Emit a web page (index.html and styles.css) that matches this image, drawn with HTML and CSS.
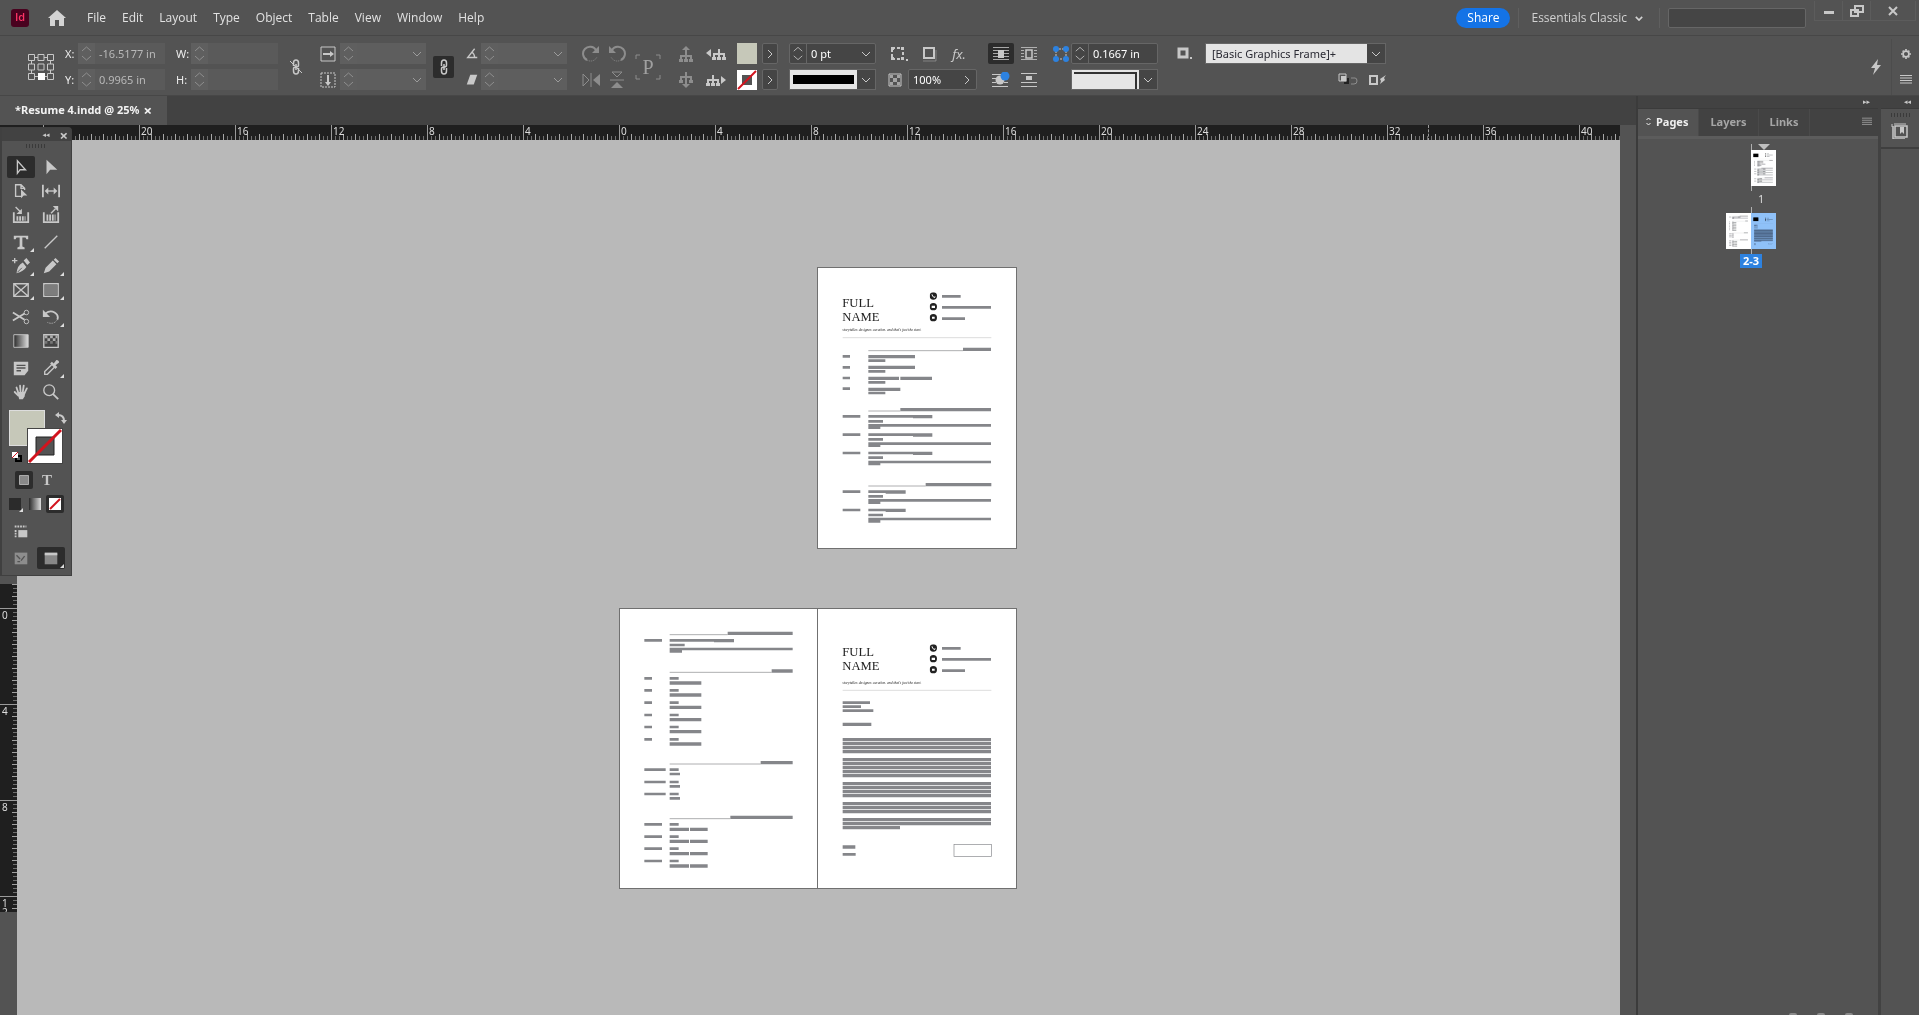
FILE: index.html
```html
<!DOCTYPE html>
<html lang="en">
<head>
<meta charset="utf-8">
<title>Resume 4.indd</title>
<link rel="stylesheet" href="styles.css">
</head>
<body>
<svg class="defs" aria-hidden="true">
  <symbol id="contacts" viewBox="0 0 186 90">
    <g fill="none" stroke="#85868a" stroke-width="8"><path d="M37 12H93M37 45H184M37 79H106"/></g>
    <g fill="#222"><circle cx="11" cy="11" r="11"/><circle cx="11" cy="43" r="11"/><circle cx="11" cy="76" r="11"/></g>
    <path d="M7 6Q7 13 15 16L16 12" fill="none" stroke="#fff" stroke-width="3"/>
    <path d="M6 40H16V47H6ZM7 73H15V79H7Z" fill="#fff"/>
  </symbol>
  <symbol id="page-1" viewBox="25 24 594 840">
    <rect x="25" y="24" width="594" height="840" fill="#fff"/>
    <use href="#contacts" x="360" y="97" width="186" height="90"/>
    <g fill="none" stroke="#85868a">
      <path stroke-width="10" d="M460 268H544M176 290H316M176 322H316M176 355H268M272 355H367M176 388H272M272 449H544M348 674H545"/>
      <path stroke-width="8" d="M99 289H121M99 322H121M99 354H121M99 386H121M176 302H227M176 334H227M176 367H227M176 399H227"/>
      <path stroke-width="8" d="M99 469H152M176 469H368M310 471H368M176 484H220M176 496H544M176 503H212M99 524H152M176 524H368M310 526H368M176 538H220M176 551H544M176 557H212M99 579H152M176 579H368M310 581H368M176 593H220M176 606H544M176 612H212"/>
      <path stroke-width="8" d="M99 695H152M176 695H288M228 697H288M176 709H220M176 721H544M176 728H212M99 750H152M176 750H288M228 752H288M176 765H220M176 777H544M176 784H212"/>
      <path stroke-width="2" d="M176 272H460M176 453H272M176 678H348"/>
      <path stroke-width="2" stroke="#ccc" d="M99 233H545"/>
    </g>
  </symbol>
  <symbol id="page-2" viewBox="31 27 591 837">
    <rect x="31" y="27" width="591" height="837" fill="#fff"/>
    <g fill="none" stroke="#85868a">
      <path stroke-width="10" d="M354 100H549M486 213H549M453 488H549M362 652H549"/>
      <path stroke-width="2" d="M180 104H354M180 217H486M180 492H453M180 656H362"/>
      <path stroke-width="8" d="M104 121H157M180 121H373M313 123H373M180 135H225M180 147H549M180 154H217"/>
      <path stroke-width="8" d="M104 235H127M180 235H207M104 271H127M180 271H207M104 308H127M180 308H207M104 345H127M180 345H207M104 381H127M180 381H207M104 418H127M180 418H207"/>
      <path stroke-width="10" d="M180 249H275M180 285H275M180 322H275M180 359H275M180 395H275M180 432H275"/>
      <path stroke-width="8" d="M104 509H168M180 509H207M180 522H211M104 546H168M180 546H207M180 559H211M104 582H168M180 582H207M180 595H211"/>
      <path stroke-width="8" d="M104 673H157M180 673H207M104 710H157M180 710H207M104 746H157M180 746H207M104 783H157M180 783H207"/>
      <path stroke-width="10" d="M180 688H238M241 688H294M180 724H238M241 724H294M180 761H238M241 761H294M180 798H238M241 798H294"/>
    </g>
  </symbol>
  <symbol id="page-3" viewBox="25 27 594 837">
    <rect x="25" y="27" width="594" height="837" fill="#fff"/>
    <use href="#contacts" x="360" y="133" width="186" height="90"/>
    <g fill="none" stroke="#85868a">
      <path stroke-width="2" stroke="#ccc" d="M99 271H545"/>
      <path stroke-width="8" d="M99 308H181M99 320H154M99 332H191M99 763H138"/>
      <path stroke-width="10" d="M99 373H185M99 741H137M99 419H544M99 431H544M99 443H544M99 455H544M99 479H544M99 491H544M99 503H544M99 515H544M99 527H544M99 551H544M99 563H544M99 575H544M99 587H544M99 611H544M99 623H544M99 635H544M99 659H544M99 671H544M99 683H271"/>
      <rect x="433" y="733" width="112" height="36" stroke-width="2"/>
    </g>
  </symbol>

  <symbol id="spin" viewBox="0 0 17 21"><path d="M4 8 8.500 4 13 8M4 13 8.500 17 13 13" class="ln"/></symbol>
  <symbol id="chev" viewBox="0 0 10 6"><path d="M1 1 5 5 9 1" class="ln"/></symbol>
  <symbol id="chev-b" viewBox="0 0 10 6"><path d="M1 1 5 5 9 1" class="ln" stroke-width="2"/></symbol>
  <symbol id="chev-r" viewBox="0 0 6 10"><path d="M1 1 5 5 1 9" class="ln"/></symbol>
  <symbol id="home" viewBox="0 0 18 16"><path class="fl" d="M9 0 18 8H16V16H11V10H7V16H2V8H0Z"/></symbol>
  <symbol id="ref" viewBox="0 0 26 26"><path class="ln" d="M6.500 3.500H10M16 3.500H20M6.500 22.500H10M16 22.500H20M3.500 6.500V10M3.500 16V20M22.500 6.500V10M22.500 16V20"/><path class="ln" d="M.5.500H6.500V6.500H.5ZM10 .5H16V6.500H10ZM19.500.500H25.500V6.500H19.500ZM.5 10H6.500V16H.5ZM10 10H16V16H10ZM19.500 10H25.500V16H19.500ZM.5 19.500H6.500V25.500H.5ZM19.500 19.500H25.500V25.500H19.500Z"/><path fill="#fff" d="M10 19H17V26H10Z"/></symbol>
  <symbol id="chain" viewBox="0 0 16 16"><path class="ln" stroke-width="1.500" d="M5.500 7V4Q5.500 1 8 1T10.500 4V6Q10.500 8 8.500 8M10.500 9V12Q10.500 15 8 15T5.500 12V10Q5.500 8 7.500 8M8 5V11"/></symbol>
  <symbol id="unchain" viewBox="0 0 16 16"><use href="#chain"/><path class="ln" d="M2 2 14 14"/></symbol>
  <symbol id="scale-x" viewBox="0 0 16 16"><path class="ln" d="M1 1H15V15H1Z"/><path class="ln" stroke-width="2" d="M3 8H11"/><path class="fl" d="M10 5 14 8 10 11Z"/></symbol>
  <symbol id="scale-y" viewBox="0 0 16 16"><path class="ln" d="M1 1H15V15H1Z" stroke-dasharray="2 1"/><path class="ln" stroke-width="2" d="M8 3V11"/><path class="fl" d="M5 10 8 14 11 10Z"/></symbol>
  <symbol id="angle" viewBox="0 0 16 16"><path class="ln" stroke-width="1.500" d="M11 2 3 12H14M8 6Q11 8 11 12"/></symbol>
  <symbol id="shear" viewBox="0 0 16 16"><path class="fl" d="M6 2H14L10 13H2Z"/></symbol>
  <symbol id="rot-cw" viewBox="0 0 18 18"><path class="ln" stroke-width="2" d="M14 5A7 7 0 1 0 5 15"/><path class="ln" stroke-dasharray="1 1" d="M5 15A7 7 0 0 0 15 12"/><path class="fl" d="M17 1V8H10Z"/></symbol>
  <symbol id="rot-ccw" viewBox="0 0 18 18"><path class="ln" stroke-width="2" d="M4 5A7 7 0 1 1 13 15"/><path class="ln" stroke-dasharray="1 1" d="M13 15A7 7 0 0 1 3 12"/><path class="fl" d="M1 1V8H8Z"/></symbol>
  <symbol id="flip-h" viewBox="0 0 18 16"><path class="ln" d="M1 2V14L7 8ZM9 1V15" /><path class="fl" d="M18 2V14L11 8Z"/></symbol>
  <symbol id="flip-v" viewBox="0 0 16 18"><path class="ln" d="M3 1H13L8 6ZM1 9H15"/><path class="fl" d="M2 17H14L8 11Z"/></symbol>
  <symbol id="pbox" viewBox="0 0 26 26"><path class="ln" d="M1 5V1H5M21 1H25V5M25 21V25H21M5 25H1V21"/></symbol>
  <symbol id="tree-up" viewBox="0 0 16 18"><path class="ln" stroke-width="2" d="M3 16V11H13V16M8 16V4"/><path class="fl" d="M4 5 8 1 12 5ZM1 14H5V17H1ZM6 14H10V17H6ZM11 14H15V17H11Z"/></symbol>
  <symbol id="tree-dn" viewBox="0 0 16 18"><path class="ln" stroke-width="2" d="M3 11V6H13V11M8 1V14"/><path class="fl" d="M4 13 8 17 12 13ZM1 9H5V12H1ZM11 9H15V12H11Z"/></symbol>
  <symbol id="tree-l" viewBox="0 0 20 16"><path class="ln" stroke-width="2" d="M8 13V8H18V13M13 13V3"/><path class="fl" d="M0 7 5 3V11ZM6 11H10V14H6ZM11 11H15V14H11ZM16 11H20V14H16Z"/></symbol>
  <symbol id="tree-r" viewBox="0 0 20 16"><path class="ln" stroke-width="2" d="M2 13V8H12V13M7 13V3"/><path class="fl" d="M20 8 15 4V12ZM0 11H4V14H0ZM5 11H9V14H5ZM10 11H14V14H10Z"/></symbol>
  <symbol id="none" viewBox="0 0 20 20"><path fill="#fff" fill-rule="evenodd" d="M0 0H20V20H0ZM5 5V15H15V5Z"/><path d="M1 19 19 1" stroke="#d2141e" stroke-width="2"/></symbol>
  <symbol id="corners" viewBox="0 0 18 16"><path class="ln" stroke-width="2" stroke-dasharray="3 2" d="M2 2H13V13H2Z"/><path class="fl" d="M1 1H4V4H1ZM11 1H14V4H11ZM1 11H4V14H1ZM11 11H14V14H11ZM16 13H18V15H16Z"/></symbol>
  <symbol id="shadow" viewBox="0 0 16 16"><path class="ln" stroke-width="2" d="M3 2H13V12H3Z"/><path class="ln" d="M2 15H15V4" opacity=".4"/></symbol>
  <symbol id="opacity" viewBox="0 0 14 14"><path class="ln" d="M1 1H13V13H1Z"/><path class="fl" d="M2 2H5V5H2ZM9 2H12V5H9ZM5 5H9V9H5ZM2 9H5V12H2ZM9 9H12V12H9Z" opacity=".7"/></symbol>
  <symbol id="wrap-none" viewBox="0 0 16 16"><path class="ln" d="M0 1.500H16M0 4.500H16M0 7.500H16M0 10.500H16M0 13.500H16" opacity=".8"/><path class="fl" d="M5 4H11V12H5Z"/></symbol>
  <symbol id="wrap-box" viewBox="0 0 16 16"><path class="ln" d="M0 1.500H16M0 4.500H3M13 4.500H16M0 7.500H3M13 7.500H16M0 10.500H3M13 10.500H16M0 13.500H16" opacity=".8"/><path class="ln" stroke-width="1.500" d="M5 4H11V12H5Z"/></symbol>
  <symbol id="wrap-shape" viewBox="0 0 18 16"><path class="ln" d="M0 2.500H9M0 6.500H4M0 10.500H4M12 10.500H16M0 14.500H16"/><circle class="fl" cx="8" cy="8" r="4.500"/><circle cx="13" cy="4" r="4.500" fill="#2d82e0"/></symbol>
  <symbol id="wrap-jump" viewBox="0 0 16 16"><path class="ln" d="M0 1.500H16M0 10.500H16M0 14.500H16"/><path class="fl" d="M5 4H11V8H5Z"/></symbol>
  <symbol id="corner-blue" viewBox="0 0 16 16"><path class="ln" stroke-dasharray="2 1" d="M3 3H13V13H3Z"/><g fill="#2d82e0"><circle cx="3" cy="3" r="3"/><circle cx="13" cy="3" r="3"/><circle cx="3" cy="13" r="3"/><circle cx="13" cy="13" r="3"/></g></symbol>
  <symbol id="frame" viewBox="0 0 16 14"><path class="ln" stroke-width="3" d="M2 2H10V10H2Z"/><path class="fl" d="M13 10H15V12H13Z"/></symbol>
  <symbol id="clear" viewBox="0 0 20 14"><path class="ln" d="M1 1H8V8H1Z"/><path class="fl" d="M3 3H8V8H3Z"/><path d="M6 10H10V5" stroke="#222" stroke-width="2" fill="none"/><path class="ln" opacity=".5" d="M13 5H17Q19 5 19 8T16 11H13"/></symbol>
  <symbol id="restyle" viewBox="0 0 18 14"><path class="ln" stroke-width="2" d="M2 3H9V11H2Z"/><path class="fl" d="M18 2 12 6 13 8 12 11 17 7 16 5Z"/></symbol>
  <symbol id="bolt" viewBox="0 0 10 16"><path class="fl" d="M7 0 0 9H4L2 16 10 6H6Z"/></symbol>
  <symbol id="gear" viewBox="0 0 12 12"><circle class="ln" cx="6" cy="6" r="3.500" stroke-width="2"/><path class="ln" stroke-width="2" d="M6 0V2M6 10V12M0 6H2M10 6H12M2 2 3 3M9 9 10 10M2 10 3 9M9 3 10 2"/></symbol>
  <symbol id="lines" viewBox="0 0 12 9"><path class="ln" d="M0 .5H12M0 3H12M0 5.500H12M0 8H12"/></symbol>

  <symbol id="t-select" viewBox="0 0 20 20"><path class="ln" stroke-width="1.500" d="M6 3V17L9 13H15Z"/></symbol>
  <symbol id="t-direct" viewBox="0 0 20 20"><path class="fl" d="M5 2V18L9 13H17Z"/></symbol>
  <symbol id="t-page" viewBox="0 0 20 20"><path class="ln" stroke-width="1.500" d="M10 16H4V3H10L14 7V9M10 3V7H14"/><path class="fl" d="M10 8V18L13 15H17Z"/></symbol>
  <symbol id="t-gap" viewBox="0 0 20 20"><path class="ln" stroke-width="2" d="M1 3V17M19 3V17"/><path class="ln" stroke-width="1.500" d="M5 10H15"/><path class="fl" d="M3 10 7 6V14ZM17 10 13 6V14Z"/></symbol>
  <symbol id="t-collect" viewBox="0 0 20 20"><path class="ln" stroke-width="2" d="M2 7V18H18V7"/><path class="ln" stroke-dasharray="2 1" stroke-width="5" d="M5 14H15"/><path class="ln" stroke-width="1.500" d="M4 1 9 6"/><path class="fl" d="M11 9H5L11 3Z"/></symbol>
  <symbol id="t-place" viewBox="0 0 20 20"><path class="ln" stroke-width="2" d="M2 7V18H18V7"/><path class="ln" stroke-dasharray="2 1" stroke-width="7" d="M5 13H15"/><path class="ln" stroke-width="1.500" d="M10 8 15 3"/><path class="fl" d="M12 0H18V6Z"/></symbol>
  <symbol id="t-type" viewBox="0 0 20 20"><path class="fl" d="M2 3H18V7H16L15 5H11.500V15L14 16V18H6V16L8.500 15V5H5L4 7H2Z"/></symbol>
  <symbol id="t-line" viewBox="0 0 20 20"><path class="ln" stroke-width="1.500" d="M3 17 17 3"/></symbol>
  <symbol id="t-pen" viewBox="0 0 20 20"><path class="ln" stroke-width="1.500" d="M0 4H6M3 1V7"/><path class="fl" d="M5 18Q6 9 12 6L16 11Q13 16 5 18ZM13 4 16 1 20 6 17 9Z"/><path d="M6 17 11 12" stroke="#535353"/></symbol>
  <symbol id="t-pencil" viewBox="0 0 20 20"><path class="fl" d="M2 18 4 12 12 4 16 8 8 16ZM13 3 15 1 19 5 17 7Z"/></symbol>
  <symbol id="t-frame" viewBox="0 0 20 20"><path class="ln" stroke-width="1.500" d="M2 3H18V17H2ZM2 3 18 17M18 3 2 17"/></symbol>
  <symbol id="t-rect" viewBox="0 0 20 20"><path class="ln" stroke-width="1.500" d="M2 3H18V17H2Z"/><path fill="#7d7d7d" d="M3 4H17V16H3Z"/></symbol>
  <symbol id="t-cut" viewBox="0 0 20 20"><path class="ln" stroke-width="2" d="M1 5 14 13M1 14 14 6"/><circle class="ln" cx="16" cy="5" r="2.500"/><circle class="ln" cx="16" cy="15" r="2.500"/></symbol>
  <symbol id="t-rotate" viewBox="0 0 20 20"><path class="ln" stroke-width="2" d="M4 6Q9 2 14 5T17 13"/><path class="ln" stroke-dasharray="1 1" d="M17 13Q13 19 6 16"/><path class="fl" d="M1 2V10H9Z"/></symbol>
  <linearGradient id="fade"><stop offset="0" stop-color="#2b2b2b"/><stop offset="1" stop-color="#ddd"/></linearGradient>
  <symbol id="t-grad" viewBox="0 0 20 20"><path fill="url(#fade)" stroke="#c8c8c8" d="M2 3H18V17H2Z"/></symbol>
  <symbol id="t-feather" viewBox="0 0 20 20"><path fill="#444" d="M2 3H18V17H2Z"/><path class="fl" d="M3 4H6V7H3ZM9 4H12V7H9ZM15 4H17V7H15ZM6 7H9V10H6ZM12 7H15V10H12Z" opacity=".8"/><path fill="#777" d="M3 10H6V13H3ZM9 10H12V13H9ZM15 10H17V13H15Z"/><path class="ln" stroke-width="1.500" d="M2 3H18V17H2Z"/></symbol>
  <symbol id="t-note" viewBox="0 0 20 20"><path class="fl" d="M2 3H18V13L14 18H2Z"/><path stroke="#535353" stroke-width="1.500" fill="none" d="M5 7H15M5 10H15M5 13H10"/></symbol>
  <symbol id="t-drop" viewBox="0 0 20 20"><path class="ln" stroke-width="1.500" d="M11 6 3 14V17H6L14 9"/><path class="fl" d="M9 5 11 3 13 5 16 1Q19 1 19 4L15 7 17 9 15 11Z"/></symbol>
  <symbol id="t-hand" viewBox="0 0 20 20"><path class="ln" stroke-width="2" stroke-linecap="round" d="M7 11 5 5M9.500 10 9 3M12 10 13 3M14 11 16.500 6M7 14 3 10"/><path class="fl" d="M6 10H15L14 15 12 18H8Z"/></symbol>
  <symbol id="t-zoom" viewBox="0 0 20 20"><circle class="ln" cx="8" cy="8" r="6" stroke-width="1.500"/><path class="ln" stroke-width="2" d="M12 12 18 18"/></symbol>
  <symbol id="t-swap" viewBox="0 0 12 12"><path class="ln" stroke-width="2" d="M3 3Q9 3 9 9"/><path class="fl" d="M0 3 4 0V6ZM9 12 6 8H12Z"/></symbol>
  <symbol id="t-default" viewBox="0 0 12 12"><path d="M5 5H10V10H5Z" fill="none" stroke="#000" stroke-width="2"/><path fill="#fff" d="M1 1H7V7H1Z"/><path stroke="#d2141e" d="M1 7 7 1"/></symbol>
  <symbol id="t-tlist" viewBox="0 0 20 20"><path class="fl" d="M7 9H17V17H7Z"/><path class="ln" stroke-dasharray="2 1" stroke-width="2" d="M3 5H16M4 9V17"/></symbol>
  <symbol id="t-normal" viewBox="0 0 20 20"><path fill="#8d8d8d" d="M3 4H17V17H3Z"/><path d="M5 7 9 11M14 8 10 13M6 14H9" stroke="#535353" stroke-width="1.500"/></symbol>
  <symbol id="t-preview" viewBox="0 0 20 20"><path fill="#888" d="M3 5H17V17H3Z"/><path class="fl" d="M3 4H17V7H3Z"/></symbol>
  <symbol id="book" viewBox="0 0 18 16"><path class="ln" stroke-width="1.500" d="M4 3H16V14H4ZM2 3V16H14"/><path class="ln" d="M1 1V4M3 1H15"/><path class="fl" d="M9 4H13V11L11 9 9 11Z"/></symbol>
</svg>

<header class="menubar">
  <span class="app">Id</span>
  <button class="icon-btn" aria-label="Home"><svg width="18" height="16"><use href="#home"/></svg></button>
  <nav class="menus">
    <button>File</button><button>Edit</button><button>Layout</button><button>Type</button><button>Object</button><button>Table</button><button>View</button><button>Window</button><button>Help</button>
  </nav>
  <div class="menubar-end">
    <button class="share">Share</button>
    <button class="workspace">Essentials Classic <svg width="8" height="5"><use href="#chev-b"/></svg></button>
    <input class="search" type="search" aria-label="Search">
  </div>
  <div class="window-btns">
    <button aria-label="Minimize"><svg width="12" height="12"><path class="fl" d="M1 6H11V9H1Z"/></svg></button>
    <button aria-label="Restore"><svg width="14" height="12"><path class="ln" stroke-width="2" d="M5 1H13V7H5ZM1 5H8V11H1Z"/></svg></button>
    <button aria-label="Close"><svg width="12" height="12"><path class="ln" stroke-width="2" d="M2 2 10 10M10 2 2 10"/></svg></button>
  </div>
</header>

<section class="control" aria-label="Control">
  <svg class="ref" width="26" height="26"><use href="#ref"/></svg>
  <div class="grp">
    <div class="row"><label for="x" class="lab">X:</label><span class="num dim"><svg class="spin"><use href="#spin"/></svg><input id="x" value="-16.5177 in"></span></div>
    <div class="row"><label for="y" class="lab">Y:</label><span class="num dim"><svg class="spin"><use href="#spin"/></svg><input id="y" value="0.9965 in"></span></div>
  </div>
  <div class="grp">
    <div class="row"><label for="w" class="lab wide">W:</label><span class="num dim"><svg class="spin"><use href="#spin"/></svg><input id="w"></span></div>
    <div class="row"><label for="h" class="lab wide">H:</label><span class="num dim"><svg class="spin"><use href="#spin"/></svg><input id="h"></span></div>
  </div>
  <button class="icon-btn unlink" aria-label="Constrain size"><svg width="16" height="16"><use href="#unchain"/></svg></button>
  <div class="pair">
    <div class="grp">
      <div class="row r4"><svg width="16" height="16"><use href="#scale-x"/></svg><span class="num combo"><svg class="spin"><use href="#spin"/></svg><input aria-label="Scale X"><svg class="arr"><use href="#chev"/></svg></span></div>
      <div class="row r4"><svg width="16" height="16"><use href="#scale-y"/></svg><span class="num combo"><svg class="spin"><use href="#spin"/></svg><input aria-label="Scale Y"><svg class="arr"><use href="#chev"/></svg></span></div>
    </div>
    <button class="icon-btn on link" aria-label="Link scale"><svg width="16" height="16"><use href="#chain"/></svg></button>
  </div>
  <div class="grp">
    <div class="row r2"><svg width="14" height="14"><use href="#angle"/></svg><span class="num combo"><svg class="spin"><use href="#spin"/></svg><input aria-label="Rotation"><svg class="arr"><use href="#chev"/></svg></span></div>
    <div class="row r2"><svg width="14" height="14"><use href="#shear"/></svg><span class="num combo"><svg class="spin"><use href="#spin"/></svg><input aria-label="Shear"><svg class="arr"><use href="#chev"/></svg></span></div>
  </div>
  <div class="pair faint">
    <div class="grp">
      <div class="row"><button class="icon-btn cell26" aria-label="Rotate clockwise"><svg width="18" height="18"><use href="#rot-cw"/></svg></button><button class="icon-btn cell26" aria-label="Rotate counterclockwise"><svg width="18" height="18"><use href="#rot-ccw"/></svg></button></div>
      <div class="row"><button class="icon-btn cell26" aria-label="Flip horizontal"><svg width="18" height="16"><use href="#flip-h"/></svg></button><button class="icon-btn cell26" aria-label="Flip vertical"><svg width="16" height="18"><use href="#flip-v"/></svg></button></div>
    </div>
    <span class="pmark"><svg width="26" height="26"><use href="#pbox"/></svg><span>P</span></span>
  </div>
  <div class="grp">
    <div class="row r12"><button class="icon-btn faint" aria-label="Select container"><svg width="16" height="18"><use href="#tree-up"/></svg></button><button class="icon-btn" aria-label="Previous object"><svg width="20" height="16"><use href="#tree-l"/></svg></button></div>
    <div class="row r12"><button class="icon-btn faint" aria-label="Select content"><svg width="16" height="18"><use href="#tree-dn"/></svg></button><button class="icon-btn" aria-label="Next object"><svg width="20" height="16"><use href="#tree-r"/></svg></button></div>
  </div>
  <div class="grp">
    <div class="row r5"><span class="swatch"></span><button class="box more" aria-label="Fill options"><svg width="6" height="10"><use href="#chev-r"/></svg></button></div>
    <div class="row r5"><svg width="20" height="20"><use href="#none"/></svg><button class="box more" aria-label="Stroke options"><svg width="6" height="10"><use href="#chev-r"/></svg></button></div>
  </div>
  <div class="grp w87">
    <div class="row"><span class="num boxed"><svg class="spin"><use href="#spin"/></svg><input aria-label="Stroke weight" value="0 pt"><svg class="arr"><use href="#chev"/></svg></span></div>
    <div class="row"><button class="stroke-style" aria-label="Stroke type"><span class="sample"></span><svg class="arr"><use href="#chev"/></svg></button></div>
  </div>
  <div class="grp">
    <div class="row r6"><button class="icon-btn cell24" aria-label="Corner shape"><svg width="18" height="16"><use href="#corners"/></svg></button><button class="icon-btn cell24" aria-label="Drop shadow"><svg width="16" height="16"><use href="#shadow"/></svg></button><button class="icon-btn cell24 fx" aria-label="Effects">fx.</button></div>
    <div class="row r5"><svg width="16" height="14"><use href="#opacity"/></svg><span class="num boxed pct"><input aria-label="Opacity" value="100%"><svg class="arr side"><use href="#chev-r"/></svg></span></div>
  </div>
  <div class="grp">
    <div class="row r2"><button class="icon-btn cell26 on" aria-label="No wrap"><svg width="16" height="16"><use href="#wrap-none"/></svg></button><button class="icon-btn cell26" aria-label="Wrap bounding box"><svg width="16" height="16"><use href="#wrap-box"/></svg></button></div>
    <div class="row r2"><button class="icon-btn cell26" aria-label="Wrap shape"><svg width="18" height="16"><use href="#wrap-shape"/></svg></button><button class="icon-btn cell26" aria-label="Jump object"><svg width="16" height="16"><use href="#wrap-jump"/></svg></button></div>
  </div>
  <div class="grp corner">
    <div class="row r2"><svg width="16" height="16"><use href="#corner-blue"/></svg><span class="num boxed"><svg class="spin"><use href="#spin"/></svg><input aria-label="Corner radius" value="0.1667 in"></span></div>
    <div class="row end"><button class="stroke-style" aria-label="Corner type"><span class="sample bend"></span><svg class="arr"><use href="#chev"/></svg></button></div>
  </div>
  <div class="grp">
    <div class="row r5"><span class="cell30"><svg width="16" height="14"><use href="#frame"/></svg></span><span class="objstyle"><select aria-label="Object style"><option>[Basic Graphics Frame]+</option></select><svg class="arr"><use href="#chev"/></svg></span></div>
    <div class="row end r10"><button class="icon-btn" aria-label="Clear overrides"><svg width="20" height="14"><use href="#clear"/></svg></button><button class="icon-btn" aria-label="Clear attributes"><svg width="18" height="14"><use href="#restyle"/></svg></button></div>
  </div>
  <div class="control-end">
    <button class="icon-btn" aria-label="Quick apply"><svg width="10" height="16"><use href="#bolt"/></svg></button>
    <div class="side-btns">
      <button class="icon-btn" aria-label="Customize"><svg width="10" height="10"><use href="#gear"/></svg></button>
      <button class="icon-btn" aria-label="Menu"><svg width="12" height="9"><use href="#lines"/></svg></button>
    </div>
  </div>
</section>

<div class="work">
  <main class="document">
    <div class="doc-tabs"><div class="doc-tab"><span>*Resume 4.indd @ 25%</span><button aria-label="Close document">×</button></div></div>
    <div class="doc-body">
      <ol class="ruler-h"><li></li><li>20</li><li>16</li><li>12</li><li>8</li><li>4</li><li>0</li><li>4</li><li>8</li><li>12</li><li>16</li><li>20</li><li>24</li><li>28</li><li>32</li><li>36</li><li>40</li><li class="cursor"></li></ol>
      <div class="doc-main">
        <div class="gutter"><ol class="ruler-v"><li>0</li><li>4</li><li>8</li><li>1<br>2</li></ol></div>
        <div class="canvas">
          <div class="sheet single">
            <svg width="198" height="280" viewBox="25 24 594 840">
              <use href="#page-1" x="25" y="24" width="594" height="840"/>
              <text x="98" y="140" class="doc-name">FULL</text>
              <text x="98" y="183" class="doc-name">NAME</text>
              <text x="98" y="214" class="doc-tag">storyteller. designer. curation. and that’s just the start.</text>
            </svg>
          </div>
          <div class="sheet spread">
            <svg width="197" height="279" viewBox="31 27 591 837"><use href="#page-2" x="31" y="27" width="591" height="837"/></svg>
            <svg class="right" width="199" height="279" viewBox="22 27 597 837">
              <use href="#page-3" x="25" y="27" width="594" height="837"/>
              <path d="M23.500 27V864" stroke="#707070" stroke-width="3"/>
              <text x="98" y="168" class="doc-name">FULL</text>
              <text x="98" y="211" class="doc-name">NAME</text>
              <text x="98" y="251" class="doc-tag">storyteller. designer. curation. and that’s just the start.</text>
            </svg>
          </div>
        </div>
      </div>
    </div>
  </main>

  <aside class="panel">
    <div class="strip">▸▸</div>
    <div class="panel-tabs" role="tablist">
      <button role="tab" class="active"><svg width="5" height="9"><path class="ln" d="M.5 3 2.500 1 4.500 3M.5 6 2.500 8 4.500 6"/></svg>Pages</button><button role="tab">Layers</button><button role="tab">Links</button>
      <button class="icon-btn panel-menu" aria-label="Panel menu"><svg width="10" height="9"><use href="#lines"/></svg></button>
    </div>
    <div class="pages">
      <div class="thumbs first"><svg width="25" height="36" viewBox="25 24 594 840" preserveAspectRatio="none"><use href="#page-1" x="25" y="24" width="594" height="840"/><path class="thumb-title" d="M80 110H200V190H80Z"/></svg></div>
      <span class="num-label">1</span>
      <div class="thumbs"><svg width="25" height="36" viewBox="31 27 591 837" preserveAspectRatio="none"><use href="#page-2" x="31" y="27" width="591" height="837"/></svg><span class="picked"><svg width="25" height="36" viewBox="25 27 594 837" preserveAspectRatio="none"><use href="#page-3" x="25" y="27" width="594" height="837"/><path class="thumb-title" d="M80 130H200V215H80Z"/></svg></span></div>
      <span class="num-label current">2-3</span>
    </div>
    <div class="panel-foot"><i></i><i></i><i></i></div>
  </aside>

  <aside class="dock">
    <div class="strip">◂◂</div>
    <button class="dock-btn" aria-label="Libraries"><span class="grip"></span><svg width="18" height="16"><use href="#book"/></svg></button>
  </aside>
</div>

<section class="toolbox" aria-label="Tools">
  <div class="tool-head"><span>◂◂</span><button aria-label="Close tools">×</button></div>
  <span class="grip"></span>
  <div class="tools">
    <button class="on" aria-label="Selection"><svg><use href="#t-select"/></svg></button><button aria-label="Direct selection"><svg><use href="#t-direct"/></svg></button>
    <button aria-label="Page"><svg><use href="#t-page"/></svg></button><button aria-label="Gap"><svg><use href="#t-gap"/></svg></button>
    <button aria-label="Content collector"><svg><use href="#t-collect"/></svg></button><button aria-label="Content placer"><svg><use href="#t-place"/></svg></button>
  </div>
  <div class="tools">
    <button class="sub" aria-label="Type"><svg><use href="#t-type"/></svg></button><button aria-label="Line"><svg><use href="#t-line"/></svg></button>
    <button class="sub" aria-label="Pen"><svg><use href="#t-pen"/></svg></button><button class="sub" aria-label="Pencil"><svg><use href="#t-pencil"/></svg></button>
    <button class="sub" aria-label="Rectangle frame"><svg><use href="#t-frame"/></svg></button><button class="sub" aria-label="Rectangle"><svg><use href="#t-rect"/></svg></button>
  </div>
  <div class="tools">
    <button aria-label="Scissors"><svg><use href="#t-cut"/></svg></button><button class="sub" aria-label="Free transform"><svg><use href="#t-rotate"/></svg></button>
    <button aria-label="Gradient swatch"><svg><use href="#t-grad"/></svg></button><button aria-label="Gradient feather"><svg><use href="#t-feather"/></svg></button>
  </div>
  <div class="tools">
    <button aria-label="Note"><svg><use href="#t-note"/></svg></button><button class="sub" aria-label="Eyedropper"><svg><use href="#t-drop"/></svg></button>
    <button aria-label="Hand"><svg><use href="#t-hand"/></svg></button><button aria-label="Zoom"><svg><use href="#t-zoom"/></svg></button>
  </div>
  <div class="paint">
    <button class="fill" aria-label="Fill"></button>
    <button class="stroke" aria-label="Stroke"><svg width="34" height="34" viewBox="0 0 34 34"><path fill="#fff" fill-rule="evenodd" d="M0 0H34V34H0ZM8 8V26H26V8Z"/><path d="M8 8V26H26V8Z" fill="none" stroke="#222"/><path d="M1 33 33 1" stroke="#d2141e" stroke-width="3"/></svg></button>
    <button class="swap" aria-label="Swap"><svg width="12" height="12"><use href="#t-swap"/></svg></button>
    <button class="default" aria-label="Default colors"><svg width="12" height="12"><use href="#t-default"/></svg></button>
  </div>
  <div class="modes">
    <button class="on m18" aria-label="Format container"><svg width="10" height="10"><path d="M.5.500H9.500V9.500H.5Z" fill="#888" stroke="#aaa"/></svg></button><button class="m18 tee" aria-label="Format text">T</button>
  </div>
  <div class="modes apply">
    <button class="m18 sub" aria-label="Apply color"><svg width="12" height="12"><path d="M0 0H12V12H0Z" fill="#2b2b2b"/></svg></button><button class="m18" aria-label="Apply gradient"><svg width="12" height="12"><path d="M0 0H12V12H0Z" fill="url(#fade)"/></svg></button><button class="on m18" aria-label="Apply none"><svg width="12" height="12"><path d="M0 0H12V12H0Z" fill="#fff"/><path d="M1 11 11 1" stroke="#d2141e" stroke-width="2"/></svg></button>
  </div>
  <div class="tools"><button aria-label="View options"><svg><use href="#t-tlist"/></svg></button></div>
  <div class="tools"><button aria-label="Normal view"><svg><use href="#t-normal"/></svg></button><button class="on sub" aria-label="Preview"><svg><use href="#t-preview"/></svg></button></div>
</section>
</body>
</html>
```

FILE: styles.css
```css
* { box-sizing: border-box; }
body {
  margin: 0;
  height: 100vh;
  overflow: hidden;
  display: flex;
  flex-direction: column;
  background: #535353;
  color: #e2e2e2;
  font: 12px/16px "Noto Sans", "Open Sans", sans-serif;
}
button, input, select { font: inherit; color: inherit; border: 0; padding: 0; margin: 0; background: none; min-width: 0; }
svg { display: block; flex: none; }
ol { list-style: none; margin: 0; padding: 0; }
.defs { position: absolute; width: 0; height: 0; }
.ln { fill: none; stroke: currentColor; }
.fl { fill: currentColor; }
.icon-btn { display: flex; align-items: center; justify-content: center; color: #c8c8c8; }
.on { background: #2c2c2c; border-radius: 2px; }
.faint, .faint .icon-btn { color: #8d8d8d; }

/* Menu bar */
.menubar { display: flex; height: 36px; border-bottom: 1px solid #474747; flex: none; padding: 1px 0 0 11px; align-items: center; font-family: "Open Sans", "Noto Sans", sans-serif; }
.app { width: 18px; height: 18px; border-radius: 3px; background: #49021f; color: #ff3366; text-align: center; font-size: 11px; font-weight: 600; }
.menubar > .icon-btn { margin: 0 21px 0 19px; color: #d4d4d4; }
.menus { display: flex; gap: 16px; }
.menubar-end { margin-left: auto; display: flex; align-items: center; }
.share { background: #1473e6; color: #fff; border-radius: 10px; height: 20px; width: 54px; }
.workspace { display: flex; align-items: center; gap: 8px; margin-left: 8px; padding: 0 16px 0 12px; border-left: 1px solid #5f5f5f; border-right: 1px solid #5f5f5f; height: 20px; color: #d2d2d2; }
.search { width: 138px; height: 20px; margin-left: 8px; background: #454545; border: 1px solid #666; border-radius: 2px; }
.window-btns { display: flex; align-self: flex-start; margin: 0 3px 0 8px; color: #c8c8c8; }
.window-btns button { width: 28px; height: 20px; display: flex; align-items: center; justify-content: center; border: solid #5c5c5c; border-width: 0 0 1px 1px; }
.window-btns button:last-child { width: 46px; border-right-width: 1px; }

/* Control bar */
.control { display: flex; align-items: center; gap: 11px; height: 60px; flex: none; padding: 2px 0 0 28px; border-bottom: 1px solid #474747; color: #c8c8c8; }
.control > * { flex: none; }
.ref { color: #c8c8c8; }
.grp { display: grid; gap: 5px; }
.row { display: flex; align-items: center; height: 21px; }
.row.end { justify-content: flex-end; }
.r2 { gap: 2px; } .r4 { gap: 4px; } .r5 { gap: 5px; } .r6 { gap: 6px; } .r10 { gap: 10px; } .r12 { gap: 12px; }
.pair { display: flex; align-items: center; gap: 7px; }
.pair.faint { gap: 5px; }
.lab { width: 13px; color: #ececec; font-size: 11px; }
.lab.wide { width: 15px; }
.num { display: flex; align-items: center; height: 21px; width: 87px; background: #5a5a5a; }
.num input { flex: 1; width: 0; height: 100%; padding: 0 4px; color: #b8b8b8; font-size: 11px; }
.spin { width: 17px; height: 21px; color: #8f8f8f; background: #5f5f5f; }
.arr { width: 10px; height: 6px; margin: 0 4px; color: #9c9c9c; }
.arr.side { width: 6px; height: 10px; margin: 0 6px; }
.combo { background: #5e5e5e; width: 86px; }
.boxed, .box { background: #454545; border: 1px solid #666; border-radius: 2px; }
.boxed input { color: #fff; }
.boxed .spin { background: none; border-right: 1px solid #666; color: #b4b4b4; }
.boxed .arr { color: #c8c8c8; }
.boxed.pct { width: 69px; }
.box.more { width: 16px; height: 21px; display: flex; align-items: center; justify-content: center; }
.unlink { width: 14px; margin-right: 6px; }
.cell24 { width: 24px; height: 21px; }
.cell26 { width: 26px; height: 21px; }
.cell30 { width: 30px; display: flex; justify-content: center; }
.link { width: 21px; height: 22px; }
.pmark { display: grid; place-items: center; width: 26px; margin-right: 6px; }
.pmark > * { grid-area: 1 / 1; }
.pmark span { font: 20px/20px "Liberation Serif", serif; color: #a0a0a0; }
.swatch { width: 20px; height: 21px; background: #c6c8b9; }
.w87 { width: 87px; }
.fx { font-style: italic; font-size: 13px; }
.stroke-style { display: flex; align-items: center; width: 87px; height: 21px; background: #454545; border: 1px solid #666; }
.stroke-style .arr, .objstyle .arr { color: #c8c8c8; }
.sample { flex: 1; height: 19px; background: #e6e6e6; padding: 5px 3px; }
.sample::before { content: ""; display: block; height: 9px; background: #000; }
.sample.bend { padding: 2px; }
.sample.bend::before { height: 15px; background: none; border: solid #333; border-width: 2px 2px 0 0; }
.corner { padding-right: 1px; }
.objstyle { display: flex; align-items: center; width: 181px; height: 21px; background: #454545; border: 1px solid #666; }
.objstyle select { flex: 1; height: 19px; appearance: none; background: #e4e4e4; color: #2a2a33; font-size: 11px; padding: 0 6px; }
.control-end { margin-left: auto; display: flex; align-items: center; height: 58px; gap: 10px; }
.side-btns { display: grid; gap: 16px; width: 28px; height: 56px; align-content: center; justify-items: center; border-left: 1px solid #4c4c4c; }

/* Document window */
.work { flex: 1; min-height: 0; display: flex; }
.document { flex: 1; min-width: 0; display: flex; flex-direction: column; border-right: 2px solid #3b3b3b; }
.doc-tabs { height: 29px; flex: none; background: #424242; display: flex; }
.doc-tab { display: flex; align-items: center; gap: 4px; width: 167px; background: #535353; padding: 0 0 1px 15px; font-size: 11px; font-weight: 700; color: #f2f2f2; }
.doc-tab button { font-size: 15px; height: 20px; line-height: 16px; }
.doc-body { flex: 1; min-height: 0; display: flex; flex-direction: column; margin-right: 16px; }
.ruler-h {
  display: flex; height: 15px; flex: none; overflow: hidden; position: relative; padding-left: 43px;
  background:
    repeating-linear-gradient(90deg, #a8a8a8 0 1px, transparent 1px 12px) 7px 100% / 100% 6px no-repeat,
    repeating-linear-gradient(90deg, #6f6f6f 0 1px, transparent 1px 4px) 3px 100% / 100% 4px no-repeat,
    #1f1f1f;
}
.ruler-h li { flex: 0 0 96px; border-left: 1px solid #9a9a9a; padding-left: 1px; font-size: 10px; line-height: 12px; color: #ddd; }
.ruler-h .cursor { position: absolute; left: 1428px; height: 16px; border-left: 1px dashed #999; }
.doc-main { flex: 1; min-height: 0; display: flex; }
.gutter { width: 17px; flex: none; padding-top: 444px; background: #535353; }
.ruler-v {
  height: 328px; padding-top: 24px; overflow: hidden;
  background:
    repeating-linear-gradient(#a0a0a0 0 1px, transparent 1px 12px) 100% 0 / 5px 100% no-repeat,
    repeating-linear-gradient(#6f6f6f 0 1px, transparent 1px 4px) 100% 0 / 4px 100% no-repeat,
    #1f1f1f;
}
.ruler-v li { height: 96px; border-top: 1px solid #9a9a9a; padding: 2px 7px 0 2px; font-size: 10px; line-height: 9px; color: #ddd; }
.canvas { flex: 1; position: relative; overflow: hidden; background: #b9b9b9; }
.sheet { position: absolute; border: 1px solid #707070; background: #fff; display: flex; }
.single { left: 800px; top: 127px; }
.spread { left: 602px; top: 468px; }
.doc-name { font: 38px "Liberation Serif", serif; fill: #222; }
.doc-tag { font: italic 11px "Liberation Serif", serif; fill: #222; }

/* Panels */
.strip { height: 12px; background: #424242; color: #c8c8c8; font: 7px/12px "DejaVu Sans", sans-serif; text-align: right; padding-right: 8px; }
.panel { width: 240px; flex: none; display: flex; flex-direction: column; }
.panel-tabs { display: flex; height: 28px; background: #424242; border-top: 1px solid #3b3b3b; align-items: stretch; }
.panel-tabs [role=tab] { display: flex; align-items: center; font-size: 11px; font-weight: 700; color: #a6a6a6; padding: 0 11px 2px; border-right: 1px solid #4a4a4a; }
.panel-tabs .active { background: #535353; color: #f0f0f0; gap: 5px; padding: 0 10px 2px 8px; }
.panel-tabs .panel-menu { margin-left: auto; padding: 0 6px 2px 0; color: #a0a0a0; }
.pages { flex: 1; border-top: 3px solid #5c5c5c; padding: 5px 14px 0 0; display: flex; flex-direction: column; align-items: center; }
.thumbs { display: flex; width: 50px; padding: 6px 0 5px; background: linear-gradient(#b0b0b0, #b0b0b0) 25px 0 / 1px 100% no-repeat; }
.thumbs svg { filter: brightness(.75) contrast(2); }
.thumb-title { fill: #444; }
.thumbs.first { padding-left: 25px; position: relative; }
.thumbs.first::before { content: ""; position: absolute; left: 32px; top: 0; border: solid transparent; border-width: 6px 6px 0; border-top-color: #c0c0c0; }
.picked { position: relative; }
.picked::after { content: ""; position: absolute; inset: 0; background: #8fc1f8; mix-blend-mode: multiply; }
.num-label { font-size: 10px; line-height: 16px; padding-left: 20px; }
.num-label.current { background: #2d82e0; color: #fff; font-weight: 700; font-size: 11px; line-height: 14px; padding: 0 3px; }
.panel-foot { height: 2px; overflow: hidden; display: flex; gap: 20px; justify-content: flex-end; padding-right: 25px; }
.panel-foot i { width: 8px; height: 8px; border-radius: 2px; background: #8a8a8a; }
.dock { width: 41px; flex: none; border-left: 3px solid #424242; }
.dock-btn { display: flex; flex-direction: column; align-items: center; gap: 6px; width: 100%; height: 41px; padding-top: 4px; border-top: 1px solid #3b3b3b; border-bottom: 2px solid #3f3f3f; color: #c8c8c8; }
.grip { width: 19px; height: 4px; background: repeating-linear-gradient(90deg, #3a3a3a 0 1px, transparent 1px 3px); }

/* Floating tools */
.toolbox { position: absolute; left: 0; top: 127px; width: 72px; height: 449px; background: #535353; border: 1px solid #404040; border-left-width: 2px; border-radius: 0 4px 0 0; display: flex; flex-direction: column; color: #c8c8c8; }
.tool-head { height: 13px; flex: none; background: #424242; display: flex; justify-content: flex-end; align-items: center; gap: 10px; padding-right: 3px; }
.tool-head span { font: 7px/12px "DejaVu Sans", sans-serif; }
.tool-head button { font-size: 15px; line-height: 12px; font-weight: 700; }
.toolbox > .grip { margin: 3px 0 7px 24px; flex: none; }
.tools { display: grid; grid-template-columns: 28px 28px; column-gap: 2px; grid-auto-rows: 24px; padding-left: 5px; margin-bottom: 3px; }
.tools button { display: flex; align-items: center; justify-content: center; margin: 1px 0; position: relative; }
.tools svg { width: 18px; height: 18px; }
.sub { position: relative; }
.sub::after { content: ""; position: absolute; right: 1px; bottom: 1px; border: solid transparent; border-width: 0 0 4px 4px; border-bottom-color: #ddd; }
.paint { position: relative; height: 53px; flex: none; margin: 3px 0 5px; }
.paint button { position: absolute; }
.paint .fill { left: 7px; top: 0; width: 36px; height: 36px; background: #c6c8b9; border: 1px solid #ddd; }
.paint .stroke { left: 26px; top: 19px; background: #535353; outline: 1px solid #444; }
.paint .swap { left: 53px; top: 2px; }
.paint .default { left: 9px; top: 41px; }
.modes { display: flex; height: 24px; flex: none; align-items: center; gap: 5px; padding-left: 13px; }
.modes.apply { gap: 2px; padding-left: 4px; margin-bottom: 3px; }
.m18 { width: 18px; height: 18px; display: flex; align-items: center; justify-content: center; }
.tee { font: bold 15px/18px "Liberation Serif", serif; }
```
